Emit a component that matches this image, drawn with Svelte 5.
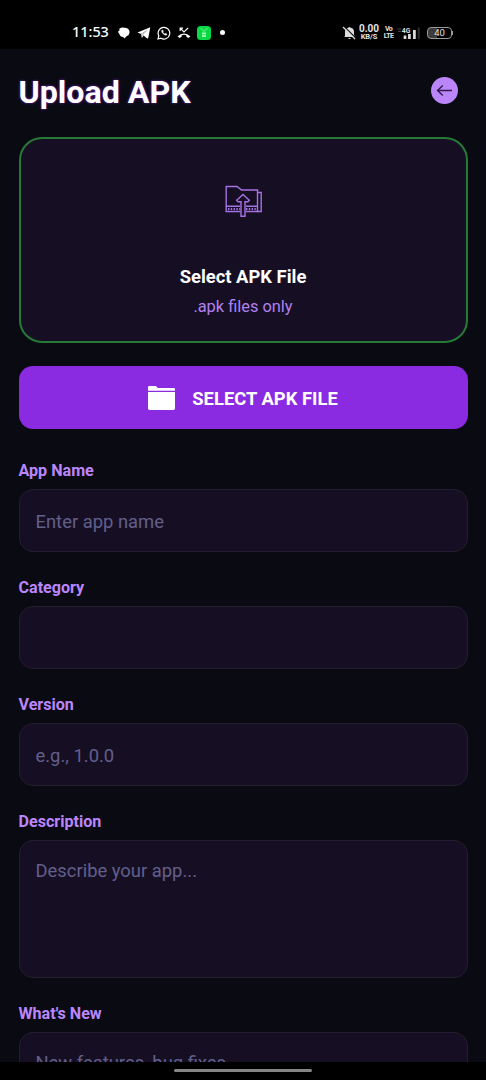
<script lang="ts">
	interface Field {
		id: string;
		label: string;
		placeholder: string;
		multiline?: boolean;
	}

	const fields: Field[] = [
		{ id: 'name', label: 'App Name', placeholder: 'Enter app name' },
		{ id: 'category', label: 'Category', placeholder: '' },
		{ id: 'version', label: 'Version', placeholder: 'e.g., 1.0.0' },
		{ id: 'description', label: 'Description', placeholder: 'Describe your app...', multiline: true },
		{ id: 'whats-new', label: "What's New", placeholder: 'New features, bug fixes...', multiline: true }
	];
</script>

<div class="screen">
	<div class="status">
		<span class="status__clock">11:53</span>
		<div class="status__apps">
			<svg width="14" height="14" viewBox="0 0 14 14">
				<path d="M2.5 2.5Q5 .8 8 1.8Q12.7 2.6 12.6 6.5Q12.4 9.4 9.6 10.2L7.4 12.6L6.2 11Q3 10.7 2.5 8.2L.8 5.6L2.3 5Z" fill="#fff" />
			</svg>
			<svg width="14" height="14" viewBox="0 0 14 14">
				<path d="M13.3 1.3L.5 6.6L4 8.1L10.4 3.9L5.6 8.8L10.2 12.4Q11 12.7 11.3 11.7Z" fill="#fff" />
				<path d="M4 8.1L4.8 12L6.8 9.8L5.6 8.8L10.4 3.9Z" fill="#ddd" />
			</svg>
			<svg width="14" height="14" viewBox="0 0 14 14" fill="none" stroke="#fff">
				<path d="M1 13L1.8 9.9A5.8 5.8 0 1 1 4 12.2Z" stroke-width="1.2" />
				<path d="M4.7 4.2Q4.2 6 6 7.8Q8.1 9.7 9.6 9L9.9 8L8.6 7.3L7.8 8Q6.6 7.4 5.9 6.2L6.3 5.4L5.7 4Z" fill="#fff" stroke-width=".4" />
			</svg>
			<svg width="14" height="14" viewBox="0 0 14 14" fill="none" stroke="#fff">
				<path d="M3.2 5V2.2H6M3.4 2.4L7 6L11.2 1.8" stroke-width="1.2" />
				<path d="M.6 10.2Q7 5 13.4 10.2L11.6 12L9.3 10.8V9.2Q7 8.4 4.7 9.2V10.8L2.4 12Z" fill="#fff" stroke="none" />
			</svg>
			<svg width="14" height="14" viewBox="0 0 14 14">
				<rect width="14" height="14" rx="3.5" fill="#07d942" />
				<path d="M3.7 2L6 4.7L7 5.2L8 4.7L10.3 2" stroke="#a2f8b4" stroke-width=".7" fill="none" />
				<path d="M5 6.5H9V11H5Z" fill="#a2f8b4" />
				<path d="M4.5 8.7H9.5" stroke="#07d942" stroke-width=".7" />
			</svg>
		</div>
		<span class="status__dot"></span>
		<div class="status__system">
			<svg class="bell" width="15" height="14" viewBox="0 0 15 14">
				<path d="M3 10.5V6Q3 2.4 6.3 1.8Q7.5 .2 8.7 1.8Q12 2.4 12 6V9L13.5 11H1.5ZM6 12H9Q7.5 14 6 12Z" fill="#ddd" />
				<path d="M2.2 .6L14 12.2" stroke="#000" stroke-width="1.2" />
				<path d="M1 1L13 13" stroke="#ddd" stroke-width="1.2" />
			</svg>
			<div class="rate"><span class="rate__value">0.00</span><span class="rate__unit">KB/S</span></div>
			<div class="volte"><span>Vo</span><span>LTE</span></div>
			<svg class="signal" width="23" height="14" viewBox="0 0 23 14">
				<path d="M.5 3H4.5M1 5.5H4" stroke="#444" />
				<text x="4.8" y="6.6" font-size="8" font-weight="700" fill="#ddd" textLength="8.5" lengthAdjust="spacingAndGlyphs">4G</text>
				<path d="M8 13V9.5M12.4 13V8M17.4 13V4" stroke="#ddd" stroke-width="2.7" />
				<path d="M21.7 13V1.5" stroke="#2c2c2c" stroke-width="2" />
			</svg>
			<div class="battery"><span>40</span></div>
		</div>
	</div>

	<main class="page">
		<header class="header">
			<h1>Upload APK</h1>
			<button class="back" aria-label="Back">
				<svg width="27" height="27" viewBox="0 0 27 27" fill="none" stroke="#30194b" stroke-width="1.4">
					<path d="M21 13.5H6.5M11.8 8.5L6.5 13.5L11.8 18.6" />
				</svg>
			</button>
		</header>

		<section class="drop">
			<svg width="38" height="34" viewBox="0 0 38 34" fill="none" stroke="#a672e3" stroke-width="1.4">
				<path d="M15.5 26.5H1.2V1.5H12L16.5 5H32.5V26.5H20.5" />
				<path d="M33 7.5H36.2V26.5H32.5" />
				<path d="M1.2 21.2H15M21 21.2H32.5" />
				<path d="M3 24H15M21 24H32" stroke-width="2" stroke-dasharray="1.4 1.4" />
				<path d="M16 31.3V16.8H13L11.7 15.3L18 9.5L24.3 15.3L23 16.8H20V31.3Z" fill="#160f24" />
			</svg>
			<strong>Select APK File</strong>
			<span>.apk files only</span>
		</section>

		<button class="select">
			<svg width="27" height="24" viewBox="0 0 27 24" fill="#fff">
				<path d="M0 4.8V1.2Q0 0 1.2 0H7.8L9.8 2H25.8Q27 2 27 3.2V4.8Z" />
				<path d="M0 5.9H27V22.6Q27 24 25.6 24H1.4Q0 24 0 22.6Z" />
			</svg>
			<span>SELECT APK FILE</span>
		</button>

		<form class="form">
			{#each fields as field (field.id)}
				<div class="field">
					<label for={field.id}>{field.label}</label>
					{#if field.multiline}
						<textarea id={field.id} placeholder={field.placeholder}></textarea>
					{:else}
						<input id={field.id} placeholder={field.placeholder} />
					{/if}
				</div>
			{/each}
		</form>
	</main>

	<div class="gesture"><span></span></div>
</div>

<style>
	:global(body) {
		background: #000;
	}

	.screen {
		display: flex;
		flex-direction: column;
		height: 1080px;
		overflow: hidden;
		background: #000;
		color: #fff;
		font-family: Roboto, sans-serif;
	}

	.screen * {
		box-sizing: border-box;
	}

	svg {
		display: block;
		flex: none;
	}

	.status {
		display: flex;
		align-items: center;
		flex: none;
		height: 49px;
		padding: 16px 34px 0 72px;
	}

	.status__clock {
		width: 45px;
		margin-top: -1px;
		font-family: 'Noto Sans', sans-serif;
		font-size: 14.4px;
		font-weight: 500;
		line-height: 18px;
	}

	.status__apps {
		display: flex;
		gap: 6px;
	}

	.status__dot {
		width: 5px;
		height: 5px;
		margin-left: 9px;
		border-radius: 50%;
		background: #fff;
	}

	.status__system {
		display: flex;
		align-items: center;
		margin-left: auto;
		color: #e2e2e2;
	}

	.rate,
	.volte {
		display: flex;
		flex-direction: column;
		align-items: center;
		font-weight: 700;
	}

	.rate {
		width: 20px;
		margin-left: 2px;
	}

	.rate__value {
		font-size: 10px;
		line-height: 8px;
	}

	.rate__unit {
		font-size: 7.4px;
		line-height: 7px;
	}

	.volte {
		width: 9px;
		margin-left: 5px;
		font-size: 7px;
		line-height: 7px;
		letter-spacing: -0.6px;
	}

	.signal {
		margin-left: 4px;
	}

	.battery {
		display: flex;
		align-items: center;
		justify-content: center;
		width: 25px;
		height: 12px;
		margin-left: 7px;
		border: 1px solid #999;
		border-radius: 4px;
		background: linear-gradient(90deg, #3c3c3c 40%, #000 40%);
		font-size: 9.5px;
		line-height: 10px;
	}

	.battery::after {
		content: '';
		width: 1px;
		height: 4px;
		margin: 0 -8px 0 7px;
		background: #999;
	}

	.page {
		flex: 1;
		min-height: 0;
		overflow: hidden;
		padding: 0 18.5px;
		background: #090a12;
	}

	.header {
		display: flex;
		align-items: center;
		justify-content: space-between;
		height: 88px;
		padding: 0 9.5px 4px 0;
	}

	h1 {
		margin: 1px 0 0;
		font-size: 32.2px;
		font-weight: 700;
		line-height: 40px;
		text-shadow: 0 0 3px #7424bf;
	}

	button {
		border: 0;
		padding: 0;
		color: inherit;
		font: inherit;
	}

	.back {
		width: 27px;
		height: 27px;
		margin-top: -1px;
		border-radius: 50%;
		background: #bb86fc;
	}

	.drop {
		display: flex;
		flex-direction: column;
		align-items: center;
		height: 206px;
		padding-top: 46px;
		border: 2px solid #267a37;
		border-radius: 23px;
		background: #160f24;
	}

	.drop svg {
		margin-left: 1px;
	}

	.drop strong {
		margin-top: 46px;
		font-size: 18.4px;
		line-height: 24px;
	}

	.drop span {
		margin-top: 7px;
		color: #b180f0;
		font-size: 16.4px;
		line-height: 22px;
	}

	.select {
		display: flex;
		align-items: center;
		justify-content: center;
		gap: 17px;
		width: 100%;
		height: 63px;
		margin-top: 23px;
		border-radius: 14px;
		background: #8a2be2;
		font-size: 18.4px;
		font-weight: 700;
	}

	.select span {
		padding-top: 1px;
	}

	.form {
		display: flex;
		flex-direction: column;
		gap: 26px;
		margin-top: 32px;
	}

	.field {
		display: flex;
		flex-direction: column;
		gap: 9px;
	}

	label {
		color: #bb86fc;
		font-size: 16.1px;
		font-weight: 700;
		line-height: 19px;
	}

	input,
	textarea {
		display: block;
		width: 100%;
		height: 63px;
		margin: 0;
		padding: 2px 16px 0;
		border: 1px solid #231d2f;
		border-radius: 14px;
		outline: 0;
		background: #160f24;
		color: #fff;
		font: 18.4px/22px Roboto, sans-serif;
	}

	textarea {
		height: 138px;
		padding-top: 19px;
		resize: none;
	}

	input::placeholder,
	textarea::placeholder {
		color: #625f8b;
		opacity: 1;
	}

	.gesture {
		display: flex;
		justify-content: center;
		flex: none;
		height: 18.5px;
		padding-top: 7.5px;
	}

	.gesture span {
		width: 138px;
		height: 3px;
		border-radius: 2px;
		background: #858585;
	}
</style>
